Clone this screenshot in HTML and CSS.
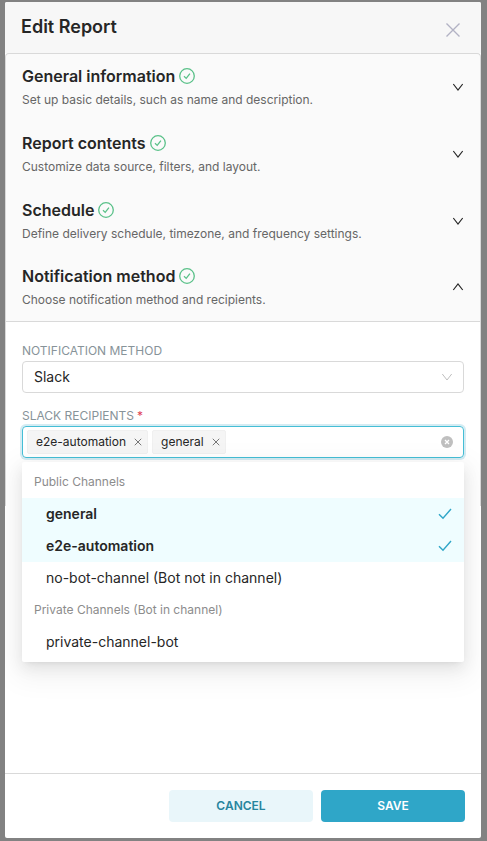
FILE: index.html
```html
<!DOCTYPE html>
<html lang="en">
<head>
<meta charset="utf-8">
<meta name="viewport" content="width=device-width, initial-scale=1">
<title>Edit Report</title>
<link rel="stylesheet" href="styles.css">
</head>
<body>
<svg class="sprite" aria-hidden="true">
  <symbol id="check-circle" viewBox="0 0 16 16"><circle cx="8" cy="8" r="7.3"/><path d="M5 8.3 7.2 10.4 10.9 5.6"/></symbol>
  <symbol id="chevron" viewBox="0 0 12 12"><path d="M1.3 3 6 9 10.7 3"/></symbol>
  <symbol id="cross" viewBox="0 0 16 16"><path d="M1.5 1.5 14.5 14.5M14.5 1.5 1.5 14.5"/></symbol>
  <symbol id="tick" viewBox="0 0 14 14"><path d="M1 7.2 5 11.3 13 2"/></symbol>
</svg>
<main class="modal" role="dialog" aria-labelledby="modal-title">
  <header class="modal-header">
    <h1 id="modal-title">Edit Report</h1>
    <button class="icon-button" type="button" aria-label="Close"><svg class="close-icon"><use href="#cross"/></svg></button>
  </header>
  <div class="modal-body">
    <div class="accordion">
      <button class="section" type="button" aria-expanded="false">
        <span class="section-text">
          <span class="section-title">General information <svg class="status"><use href="#check-circle"/></svg></span>
          <span class="section-note">Set up basic details, such as name and description.</span>
        </span>
        <svg class="chevron"><use href="#chevron"/></svg>
      </button>
      <button class="section" type="button" aria-expanded="false">
        <span class="section-text">
          <span class="section-title">Report contents <svg class="status"><use href="#check-circle"/></svg></span>
          <span class="section-note">Customize data source, filters, and layout.</span>
        </span>
        <svg class="chevron"><use href="#chevron"/></svg>
      </button>
      <button class="section" type="button" aria-expanded="false">
        <span class="section-text">
          <span class="section-title">Schedule <svg class="status"><use href="#check-circle"/></svg></span>
          <span class="section-note">Define delivery schedule, timezone, and frequency settings.</span>
        </span>
        <svg class="chevron"><use href="#chevron"/></svg>
      </button>
      <button class="section" type="button" aria-expanded="true">
        <span class="section-text">
          <span class="section-title">Notification method <svg class="status"><use href="#check-circle"/></svg></span>
          <span class="section-note">Choose notification method and recipients.</span>
        </span>
        <svg class="chevron chevron-up"><use href="#chevron"/></svg>
      </button>
      <div class="panel">
        <div class="field">
          <label for="method">NOTIFICATION METHOD</label>
          <div class="select">
            <select id="method"><option>Slack</option></select>
            <svg class="select-arrow"><use href="#chevron"/></svg>
          </div>
        </div>
        <div class="field">
          <label for="recipients">SLACK RECIPIENTS<span class="required">*</span></label>
          <div class="multiselect">
            <span class="tag">e2e-automation <button type="button" aria-label="Remove e2e-automation"><svg><use href="#cross"/></svg></button></span>
            <span class="tag">general <button type="button" aria-label="Remove general"><svg><use href="#cross"/></svg></button></span>
            <input id="recipients" type="text" role="combobox" aria-expanded="true" aria-controls="channels">
            <button class="clear" type="button" aria-label="Clear"><svg viewBox="0 0 12 12"><circle cx="6" cy="6" r="6"/><path d="M4 4 8 8M8 4 4 8"/></svg></button>
            <div class="dropdown" id="channels" role="listbox">
              <div class="group">Public Channels</div>
              <div class="option selected" role="option" aria-selected="true">general <svg><use href="#tick"/></svg></div>
              <div class="option selected" role="option" aria-selected="true">e2e-automation <svg><use href="#tick"/></svg></div>
              <div class="option" role="option" aria-selected="false">no-bot-channel (Bot not in channel)</div>
              <div class="group">Private Channels (Bot in channel)</div>
              <div class="option" role="option" aria-selected="false">private-channel-bot</div>
            </div>
          </div>
        </div>
      </div>
    </div>
  </div>
  <footer class="modal-footer">
    <button class="button button-secondary" type="button">CANCEL</button>
    <button class="button button-primary" type="button">SAVE</button>
  </footer>
</main>
</body>
</html>
```
FILE: styles.css
```css
* { box-sizing: border-box; }

body {
  margin: 0;
  min-height: 100vh;
  display: flex;
  padding: 2px 6px 3px 5px;
  background: #828282;
  color: #262626;
  font: 14px/20px Inter, "Liberation Sans", sans-serif;
}

button, input, select { font: inherit; color: inherit; }

button {
  padding: 0;
  border: 0;
  background: none;
  cursor: pointer;
}

svg {
  display: block;
  flex: none;
  fill: none;
  stroke: currentColor;
}

.sprite { position: absolute; width: 0; height: 0; }

.modal {
  flex: 1;
  min-width: 0;
  display: flex;
  flex-direction: column;
  overflow: hidden;
  border-radius: 2px;
  background: #fff;
}

.modal-header {
  display: flex;
  align-items: center;
  justify-content: space-between;
  height: 51px;
  padding: 0 20px 2px 16px;
  background: #f7f7f7;
}

h1 {
  margin: 0;
  font-size: 18px;
  line-height: 24px;
  font-weight: 600;
}

.icon-button { padding-top: 6px; color: #b2b2c4; }
.close-icon { width: 16px; height: 16px; stroke-width: 1.4; }

.modal-body { flex: 1; }

.accordion {
  border: 1px solid #d9d9d9;
  border-bottom: 0;
  border-radius: 4px 4px 0 0;
  background: #fafafa;
}

.section {
  display: flex;
  align-items: center;
  justify-content: space-between;
  width: 100%;
  height: 67px;
  padding: 0 16px;
  text-align: left;
}

.section[aria-expanded="true"] { height: 66px; }

.section-title {
  display: flex;
  align-items: center;
  gap: 4px;
  font-size: 16px;
  line-height: 24px;
  font-weight: 600;
}

.section-note {
  display: block;
  font-size: 12px;
  line-height: 24px;
  color: #666;
}

.status { width: 16px; height: 16px; color: #5ac189; stroke-width: 1.3; }
.chevron { width: 12px; height: 12px; margin-bottom: 2px; stroke-width: 1.2; }
.chevron-up { transform: rotate(180deg); }

.panel {
  padding: 20px 16px 48px;
  border-top: 1px solid #d9d9d9;
  background: #fff;
}

.field + .field { margin-top: 14px; }

.field label {
  display: block;
  margin-bottom: 1px;
  font-size: 12px;
  line-height: 18px;
  color: #879399;
}

.required { margin-left: 3px; color: #e04355; }

.select, .multiselect {
  position: relative;
  height: 32px;
}

.select select {
  width: 100%;
  height: 100%;
  padding: 0 11px;
  border: 1px solid #d9d9d9;
  border-radius: 4px;
  background: #fff;
  appearance: none;
}

.select-arrow {
  position: absolute;
  top: 10px;
  right: 11px;
  width: 12px;
  height: 12px;
  color: #bfbfbf;
  pointer-events: none;
}

.multiselect {
  display: flex;
  align-items: center;
  gap: 4px;
  padding: 0 10px 0 4px;
  border: 1px solid #45bed6;
  border-radius: 4px;
  box-shadow: 0 0 0 2px #d4ecf3;
}

.multiselect input {
  flex: 1;
  min-width: 0;
  border: 0;
  outline: 0;
  background: none;
}

.tag {
  display: flex;
  align-items: center;
  gap: 8px;
  height: 24px;
  padding: 0 5px 0 8px;
  border: 1px solid #f0f0f0;
  border-radius: 2px;
  background: #f5f5f5;
  font-size: 12px;
}

.tag svg { width: 8px; height: 8px; color: #777; stroke-width: 2; }

.clear svg { width: 12px; height: 12px; }
.clear circle { fill: #bfbfbf; stroke: none; }
.clear path { stroke: #fff; stroke-width: 1.3; }

.dropdown {
  position: absolute;
  z-index: 1;
  top: 35px;
  left: -1px;
  right: -1px;
  padding: 4px 0;
  border-radius: 2px;
  background: #fff;
  box-shadow: 0 3px 6px -4px rgba(0, 0, 0, .12), 0 6px 16px rgba(0, 0, 0, .08), 0 9px 28px 8px rgba(0, 0, 0, .05);
}

.group, .option {
  display: flex;
  align-items: center;
  justify-content: space-between;
  height: 32px;
  padding: 0 12px;
}

.group { font-size: 12px; color: #8c8c8c; }
.option { padding-left: 24px; }

.selected { background: #effdff; font-weight: 600; }
.selected svg { width: 14px; height: 14px; color: #2fa6c8; stroke-width: 1.4; }

.modal-footer {
  display: flex;
  justify-content: flex-end;
  gap: 8px;
  padding: 16px;
  border-top: 1px solid #d9d9d9;
}

.button {
  width: 144px;
  height: 32px;
  border-radius: 4px;
  font-size: 12px;
  font-weight: 600;
}

.button-secondary { background: #e9f6fa; color: #27859e; }
.button-primary { background: #2fa6c8; color: #fff; }
```
